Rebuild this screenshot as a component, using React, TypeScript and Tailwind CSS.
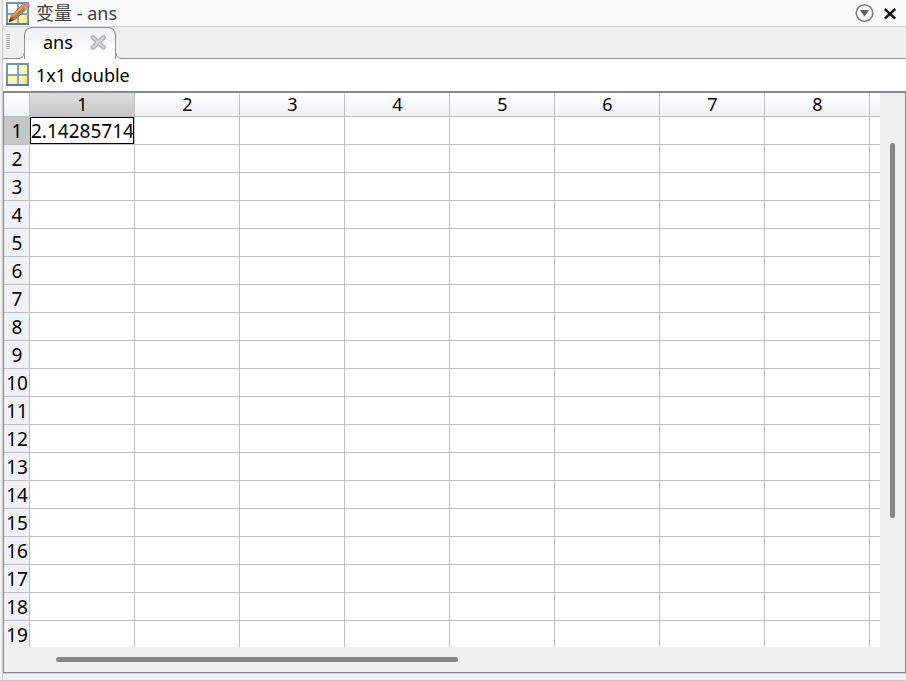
import { useState } from "react";

const COLUMNS = [1, 2, 3, 4, 5, 6, 7, 8];
const ROWS = Array.from({ length: 19 }, (_, i) => i + 1);

const VALUES: Record<string, string> = { "1:1": "2.14285714" };

function GridShape() {
  return (
    <>
      <defs>
        <linearGradient id="sheet" x1="0" y1="0" x2="1" y2="1">
          <stop offset="0" stopColor="#fdf8c4" />
          <stop offset="1" stopColor="#f5e37c" />
        </linearGradient>
      </defs>
      <rect width="23" height="23" fill="#7394b4" />
      <path d="M0 22h23" stroke="#587b9f" strokeWidth="2" />
      <rect x="2" y="2" width="9" height="9" fill="#fffef4" />
      <rect x="13" y="2" width="8" height="9" fill="#fdf6bc" />
      <rect x="2" y="13" width="9" height="8" fill="#fdf4b0" />
      <rect x="13" y="13" width="8" height="8" fill="url(#sheet)" />
      <path d="M12 2v19M2 12h19" stroke="#88a4bf" strokeWidth="2" />
    </>
  );
}

function VariableIcon() {
  return (
    <svg viewBox="0 0 23 23" className="size-[23px] shrink-0" aria-hidden="true">
      <GridShape />
    </svg>
  );
}

function EditorIcon() {
  return (
    <svg viewBox="0 0 24 23" className="h-[23px] w-6 shrink-0" aria-hidden="true">
      <GridShape />
      {/* pencil */}
      <path d="M3.2 19.8l2.2-6L16.6 2.6l4.4 4L9.2 17.4z" fill="#bd8146" stroke="#86592f" strokeWidth=".8" />
      <path d="M6.8 14L17.6 3.4" stroke="#dfab70" strokeWidth="1.5" />
      <path d="M3.2 19.8l2.2-5.4 3.6 3z" fill="#8a6748" />
      <path d="M2.8 20.2l1.2-3.6 2.4 2.2z" fill="#302824" />
      <path d="M15.6 3.2l2-2 4.6 4.6-2 2z" fill="#a3a9b4" />
      <path d="M17.4 1.6C19-.2 21.2 0 22.6 1.4s1.4 2.8-.2 4.4z" fill="#df8490" stroke="#bd6a76" strokeWidth=".6" />
    </svg>
  );
}

function TitleBar() {
  return (
    <header className="flex h-[27px] shrink-0 items-center border-b border-[#d4d4d4] bg-[#fafafa] pr-2 pl-[3px]">
      <EditorIcon />
      <h1 className="ml-[6px] flex-1 pb-px text-lg leading-6 text-[#404040]">变量 - ans</h1>
      <button type="button" aria-label="Show actions" className="size-5">
        <svg viewBox="0 0 20 20" className="size-5">
          <circle cx="10.5" cy="10" r="8.3" fill="#fdfdfd" stroke="#808080" strokeWidth="1.6" />
          <path d="M6 7h9l-4.5 6.5z" fill="#606060" />
        </svg>
      </button>
      <button type="button" aria-label="Close" className="ml-2 size-4">
        <svg viewBox="0 0 16 16" className="size-4">
          <path d="M2.8 4l10.4 9.6M13.2 4L2.8 13.6" stroke="#111" strokeWidth="2.4" />
        </svg>
      </button>
    </header>
  );
}

function TabBar() {
  return (
    <div className="flex h-8 shrink-0 items-end border-b border-[#939393] bg-[#efefef] pl-[3px]">
      <svg viewBox="0 0 4 16" className="mb-2 h-4 w-1" aria-hidden="true">
        <path d="M0 .5h4M0 2.5h4M0 4.5h4M0 6.5h4M0 8.5h4M0 10.5h4M0 12.5h4M0 14.5h4" stroke="#b8b8b8" />
      </svg>
      <svg viewBox="0 0 6 6" className="-mb-px ml-2 size-[6px]" aria-hidden="true">
        <path d="M0 5.5Q5.5 5.5 6 0V6H0z" fill="#fff" />
        <path d="M0 5.5Q5.5 5.5 6 0" fill="none" stroke="#939393" />
      </svg>
      <div className="-mb-px flex h-8 items-center rounded-t-lg border border-b-0 border-[#939393] bg-linear-to-b from-[#f1f1f5] to-white pr-[9px] pb-[3px] pl-[18px]">
        <button type="button" role="tab" aria-selected="true" className="text-lg leading-6">
          ans
        </button>
        <button type="button" aria-label="Close ans" className="ml-[17px] size-4">
          <svg viewBox="0 0 16 16" className="size-4">
            <path d="M3 3.5l10.6 10M13.6 3.5L3 13.5" stroke="#b0b0b0" strokeWidth="4.6" strokeLinecap="round" />
            <path d="M3 3.5l10.6 10M13.6 3.5L3 13.5" stroke="#d8d8d8" strokeWidth="2" strokeLinecap="round" />
          </svg>
        </button>
      </div>
      <svg viewBox="0 0 6 6" className="-mb-px size-[6px]" aria-hidden="true">
        <path d="M6 5.5Q.5 5.5 0 0V6H6z" fill="#fff" />
        <path d="M6 5.5Q.5 5.5 0 0" fill="none" stroke="#939393" />
      </svg>
    </div>
  );
}

export default function App() {
  const [selected, setSelected] = useState({ row: 1, col: 1 });

  return (
    <div className="flex h-screen flex-col border-b border-[#c8c8c8] bg-[#efefef] font-['Noto_Sans','Noto_Sans_CJK_SC',sans-serif] text-black">
      <main className="ml-[2px] flex min-h-0 flex-1 flex-col border-l border-[#cfcfcf]">
        <TitleBar />
        <TabBar />
        <div className="flex h-8 shrink-0 items-center bg-white pb-px pl-[3px]">
          <VariableIcon />
          <p className="ml-[7px] text-lg leading-6">1x1 double</p>
        </div>

        <div className="mb-[7px] flex min-h-0 flex-1 flex-col border border-t-2 border-[#858990] shadow-[0_1px_0_#cdd0d5]">
          <div className="flex min-h-0 flex-1">
            <div className="min-w-0 flex-1 overflow-hidden bg-white">
              <table className="w-full table-fixed border-separate border-spacing-0 text-[19px] leading-6">
                <colgroup>
                  <col className="w-[26px]" />
                  {COLUMNS.map((col) => (
                    <col key={col} className="w-[105px]" />
                  ))}
                  <col />
                </colgroup>
                <thead>
                  <tr className="h-6">
                    <td className="border-r border-b border-[#c0c0c0] bg-linear-to-b from-white to-[#f0f1f4] p-0" />
                    {COLUMNS.map((col) => (
                      <th
                        key={col}
                        scope="col"
                        className={`border-r border-b border-[#c0c0c0] bg-linear-to-b p-0 pl-px text-lg leading-[23px] font-normal ${
                          col === selected.col ? "from-[#dedede] to-[#c6c6c6]" : "from-white to-[#f0f1f4]"
                        }`}
                      >
                        {col}
                      </th>
                    ))}
                    <td className="border-b border-[#c0c0c0] bg-linear-to-b from-white to-[#f0f1f4] p-0" />
                  </tr>
                </thead>
                <tbody>
                  {ROWS.map((row) => (
                    <tr key={row} className="h-7">
                      <th
                        scope="row"
                        className={`border-r border-b border-[#c0c0c0] p-0 pl-px font-normal ${
                          row === selected.row ? "bg-[#c6c6c6]" : "bg-[#f0f1f4]"
                        }`}
                      >
                        {row}
                      </th>
                      {COLUMNS.map((col) => (
                        <td
                          key={col}
                          onClick={() => setSelected({ row, col })}
                          className={`overflow-hidden border-r border-b border-[#c0c0c0] p-0 whitespace-nowrap ${
                            row === selected.row && col === selected.col ? "inset-ring inset-ring-black" : ""
                          }`}
                        >
                          <span className="block pl-px">{VALUES[`${row}:${col}`]}</span>
                        </td>
                      ))}
                      <td className="border-b border-[#c0c0c0] p-0" />
                    </tr>
                  ))}
                </tbody>
              </table>
            </div>
            <div className="flex w-[25px] justify-center pt-[50px] pb-1">
              <div className="h-3/4 w-[5px] rounded-full bg-[#858585]" />
            </div>
          </div>
          <div className="flex h-[25px] shrink-0 items-center pr-[46px] pl-[52px]">
            <div className="h-[5px] w-1/2 rounded-full bg-[#858585]" />
          </div>
        </div>
      </main>
    </div>
  );
}
